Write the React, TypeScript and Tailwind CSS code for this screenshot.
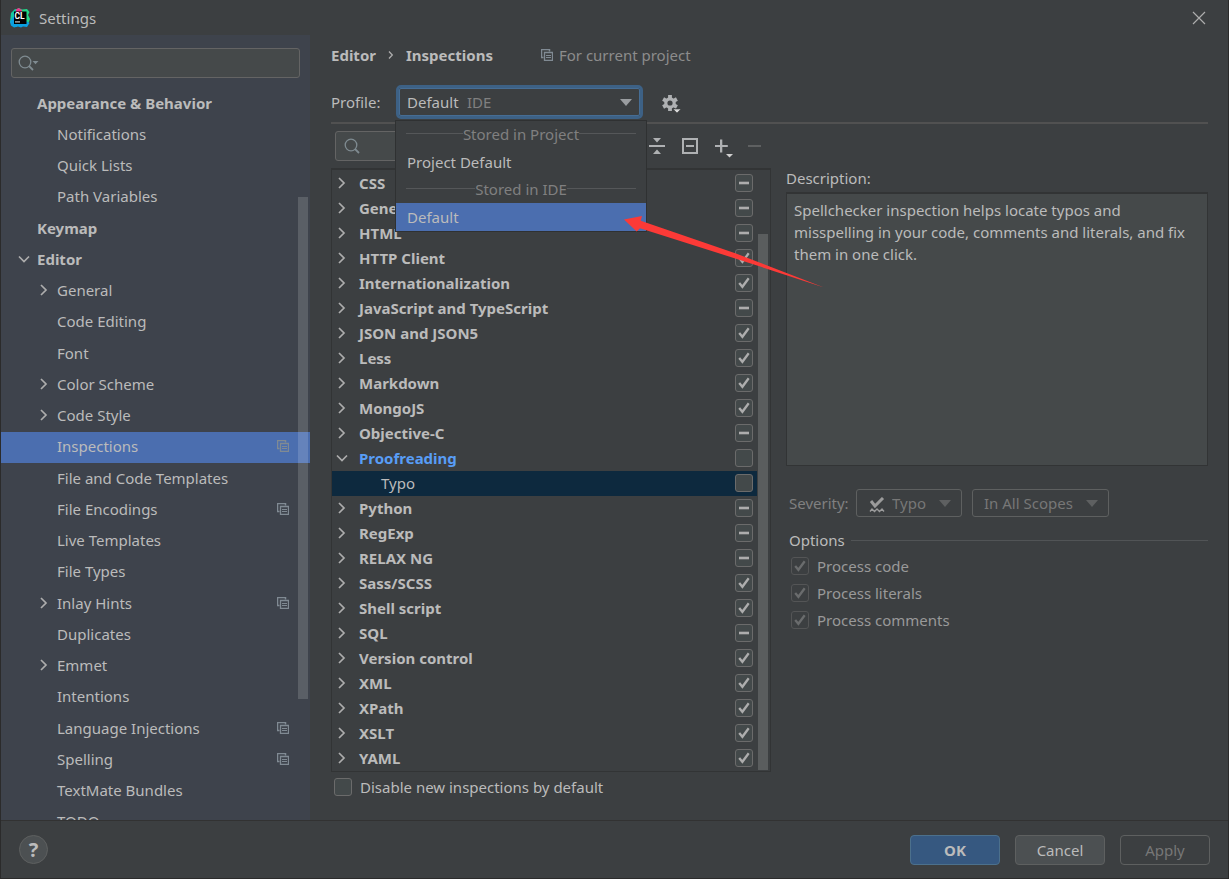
import React, { useState } from 'react';

type CheckState = 'on' | 'off' | 'mixed';

interface NavItem {
  label: string;
  level: 0 | 1;
  arrow?: 'open' | 'closed';
  perProject?: boolean;
}

interface Inspection {
  label: string;
  state: CheckState;
  open?: boolean;
  child?: boolean;
}

const NAV_ITEMS: NavItem[] = [
  { label: 'Appearance & Behavior', level: 0 },
  { label: 'Notifications', level: 1 },
  { label: 'Quick Lists', level: 1 },
  { label: 'Path Variables', level: 1 },
  { label: 'Keymap', level: 0 },
  { label: 'Editor', level: 0, arrow: 'open' },
  { label: 'General', level: 1, arrow: 'closed' },
  { label: 'Code Editing', level: 1 },
  { label: 'Font', level: 1 },
  { label: 'Color Scheme', level: 1, arrow: 'closed' },
  { label: 'Code Style', level: 1, arrow: 'closed' },
  { label: 'Inspections', level: 1, perProject: true },
  { label: 'File and Code Templates', level: 1 },
  { label: 'File Encodings', level: 1, perProject: true },
  { label: 'Live Templates', level: 1 },
  { label: 'File Types', level: 1 },
  { label: 'Inlay Hints', level: 1, arrow: 'closed', perProject: true },
  { label: 'Duplicates', level: 1 },
  { label: 'Emmet', level: 1, arrow: 'closed' },
  { label: 'Intentions', level: 1 },
  { label: 'Language Injections', level: 1, perProject: true },
  { label: 'Spelling', level: 1, perProject: true },
  { label: 'TextMate Bundles', level: 1 },
  { label: 'TODO', level: 1 },
];

const INSPECTIONS: Inspection[] = [
  { label: 'CSS', state: 'mixed' },
  { label: 'General', state: 'mixed' },
  { label: 'HTML', state: 'mixed' },
  { label: 'HTTP Client', state: 'on' },
  { label: 'Internationalization', state: 'on' },
  { label: 'JavaScript and TypeScript', state: 'mixed' },
  { label: 'JSON and JSON5', state: 'on' },
  { label: 'Less', state: 'on' },
  { label: 'Markdown', state: 'on' },
  { label: 'MongoJS', state: 'on' },
  { label: 'Objective-C', state: 'mixed' },
  { label: 'Proofreading', state: 'off', open: true },
  { label: 'Typo', state: 'off', child: true },
  { label: 'Python', state: 'mixed' },
  { label: 'RegExp', state: 'mixed' },
  { label: 'RELAX NG', state: 'mixed' },
  { label: 'Sass/SCSS', state: 'on' },
  { label: 'Shell script', state: 'on' },
  { label: 'SQL', state: 'mixed' },
  { label: 'Version control', state: 'on' },
  { label: 'XML', state: 'on' },
  { label: 'XPath', state: 'on' },
  { label: 'XSLT', state: 'on' },
  { label: 'YAML', state: 'on' },
];

const OPTIONS = ['Process code', 'Process literals', 'Process comments'];

const Chevron: React.FC<{ open?: boolean }> = ({ open }) => (
  <svg viewBox="0 0 12 12" className="size-3 shrink-0" fill="none" stroke="#adadad" strokeWidth="1.7">
    <path d={open ? 'M1 3.5 6 8.5 11 3.5' : 'M3 1 8 6 3 11'} />
  </svg>
);

const ProjectIcon: React.FC = () => (
  <svg viewBox="0 0 12 12" className="size-3 shrink-0" fill="none" stroke="#808a93">
    <path d="M2.5 8.5h-2v-8h8v2" strokeWidth="1.5" />
    <path d="M3.5 3.5h8v8h-8z" strokeWidth="1.3" />
    <path d="M5 6.5h5M5 8.5h5" />
  </svg>
);

const TriangleDown: React.FC<{ color: string }> = ({ color }) => (
  <svg viewBox="0 0 12 7" className="h-[7px] w-3" fill={color}>
    <path d="M0 0h12L6 7z" />
  </svg>
);

const SearchIcon: React.FC<{ menu?: boolean }> = ({ menu }) => (
  <svg viewBox="0 0 22 16" className="h-4 w-[22px]" fill="none" stroke="#7f8b91">
    <circle cx="7" cy="7" r="5.8" strokeWidth="1.3" />
    <path d="m11 11 4 4" strokeWidth="1.8" />
    {menu && <path d="M14.5 6h6l-3 3.2z" fill="#7f8b91" stroke="none" />}
  </svg>
);

const Check: React.FC<{ state: CheckState; label: string; disabled?: boolean }> = ({ state, label, disabled }) => {
  const [value, setValue] = useState<CheckState>(state);

  return (
    <span className="grid size-[18px] shrink-0 place-items-center">
      <input
        type="checkbox"
        aria-label={label}
        disabled={disabled}
        checked={value === 'on'}
        ref={(el) => {
          if (el) el.indeterminate = value === 'mixed';
        }}
        onChange={() => setValue(value === 'on' ? 'off' : 'on')}
        className="col-start-1 row-start-1 size-[18px] appearance-none rounded-[3px] border border-[#6b6b6b] bg-[#43494a] disabled:border-[#545556] disabled:bg-[#3c3f41]"
      />
      {value !== 'off' && (
        <svg
          viewBox="0 0 18 18"
          className="pointer-events-none col-start-1 row-start-1 size-[18px]"
          fill="none"
          stroke={disabled ? '#6a6c6d' : '#adadad'}
          strokeWidth="2.3"
        >
          {value === 'on' ? <path d="M4.2 9 7.4 12.800 13.700 4.300" /> : <path d="M4 9h10" strokeWidth="2.6" />}
        </svg>
      )}
    </span>
  );
};

const Logo: React.FC = () => (
  <svg viewBox="0 0 20 20" className="size-5">
    <path d="M1 5 5 1l4 .5L8 11l-1 8-4-1-3-4z" fill="#14c8a0" />
    <path d="M6 1.5 9 0l3 1.5 5-.5 2.500 3-1.500 3 2 4-2 5H8z" fill="#21d789" />
    <path d="M6 1.5 8.5 0l3.5 2-1 4H6z" fill="#ed358c" />
    <path d="m0 14 3-5 13 4 3.500 2-2.500 4-4-.5-2 1-3-1-4 1-3-2z" fill="#0a9fe0" />
    <path d="M4 3.500h12.500v12.500H4z" fill="#000" />
    <text x="4.500" y="11" fill="#fff" fontSize="8.5" fontWeight="700" fontFamily="Roboto, sans-serif">
      CL
    </text>
    <path d="M5 13.300h5v1.200H5z" fill="#ccc" />
  </svg>
);

const Sidebar: React.FC = () => {
  const [selected, setSelected] = useState('Inspections');

  return (
    <aside className="relative flex w-[309px] shrink-0 flex-col overflow-hidden bg-[#3e434c]">
      <div className="relative mx-[10px] mt-[13px]">
        <input
          type="search"
          aria-label="Search settings"
          className="block h-[30px] w-full rounded-[3px] border border-[#646464] bg-[#45494a] pl-9 outline-none"
        />
        <span className="pointer-events-none absolute top-[7px] left-[7px]">
          <SearchIcon menu />
        </span>
      </div>
      <nav className="mt-[10px] flex h-[750px] shrink-0 flex-col">
        {NAV_ITEMS.map((item) => (
          <button
            key={item.label}
            type="button"
            onClick={() => setSelected(item.label)}
            className={`flex w-full flex-1 items-center pr-[21px] pb-[2px] text-left ${
              item.level === 0 ? 'pl-[17px] font-bold' : 'pl-[37px]'
            } ${item.label === selected ? 'bg-[#4b6eaf]' : ''}`}
          >
            <span className="flex w-[19px] shrink-0">{item.arrow && <Chevron open={item.arrow === 'open'} />}</span>
            <span className="flex-1 whitespace-nowrap">{item.label}</span>
            {item.perProject && <ProjectIcon />}
          </button>
        ))}
      </nav>
      <div className="absolute top-[162px] right-[2px] h-[502px] w-[10px] bg-white/15" />
    </aside>
  );
};

const PopupHeader: React.FC<{ children: React.ReactNode }> = ({ children }) => (
  <div className="flex h-[27px] items-center px-[10px] pb-[2px] text-[#808080]">
    <span className="h-px flex-1 bg-[#555759]" />
    {children}
    <span className="h-px flex-1 bg-[#555759]" />
  </div>
);

const ProfilePicker: React.FC = () => {
  const [profile, setProfile] = useState('Default');
  const [open, setOpen] = useState(true);

  const pick = (name: string) => {
    setProfile(name);
    setOpen(false);
  };

  return (
    <div className="relative ml-auto h-[34px] w-[247px]">
      <select
        id="profile"
        value={profile}
        onMouseDown={(e) => {
          e.preventDefault();
          setOpen(!open);
        }}
        onChange={(e) => setProfile(e.target.value)}
        className="h-full w-full appearance-none rounded-[5px] border-[3px] border-[#3d6185] bg-[#3c3f41] pl-2 outline-1 -outline-offset-4 outline-[#466d94]"
      >
        <option>Project Default</option>
        <option>Default</option>
      </select>
      <span className="pointer-events-none absolute inset-y-0 left-[71px] flex items-center text-[#808080]">IDE</span>
      <span className="pointer-events-none absolute inset-y-0 right-[11px] flex items-center">
        <TriangleDown color="#9a9da0" />
      </span>
      {open && (
        <div className="absolute top-[35px] left-[-1px] z-10 w-[252px] border border-[#2f3132] bg-[#3c3f41]">
          <PopupHeader>Stored in Project</PopupHeader>
          <button type="button" onClick={() => pick('Project Default')} className="block h-7 w-full px-[11px] text-left">
            Project Default
          </button>
          <PopupHeader>Stored in IDE</PopupHeader>
          <button type="button" onClick={() => pick('Default')} className="block h-7 w-full bg-[#4b6eaf] px-[11px] text-left">
            Default
          </button>
        </div>
      )}
      {/* Pointer to the selected profile */}
      <svg
        viewBox="0 0 201 72"
        className="pointer-events-none absolute top-[131px] left-[228px] z-20 h-[72px] w-[201px]"
        fill="#fc3a37"
      >
        <path d="M0 3.500 18 0l-1.300 4.700L112 37.500 200 71.500 112 42.700 16 12.300l-3.300 3.200z" />
      </svg>
    </div>
  );
};

const Toolbar: React.FC = () => (
  <div className="flex items-center pt-[7px]">
    <div className="relative ml-1 w-[280px]">
      <input
        type="search"
        aria-label="Search inspections"
        className="block h-[30px] w-full rounded-[3px] border border-[#646464] bg-[#45494a] pl-9 outline-none"
      />
      <span className="pointer-events-none absolute top-[7px] left-[9px]">
        <SearchIcon />
      </span>
    </div>
    <div className="ml-auto flex gap-[15px] pr-[6px]">
      <button type="button" aria-label="Collapse all">
        <svg viewBox="0 0 18 18" className="size-[18px]" fill="#afb1b3">
          <path d="M1 8h16v2H1zM5 1h8L9 5.4zM5 17h8l-4-4.4z" />
        </svg>
      </button>
      <button type="button" aria-label="Reset to empty">
        <svg viewBox="0 0 18 18" className="size-[18px]" fill="none" stroke="#afb1b3" strokeWidth="2">
          <path d="M2 2h14v14H2zM5 9h8" />
        </svg>
      </button>
      <button type="button" aria-label="Add">
        <svg viewBox="0 0 18 18" className="size-[18px] overflow-visible" fill="#afb1b3">
          <path d="M6 2.500h2.300V8h5.500v2H8.300v5.500H6V10H1V8h5z" />
          <path d="M12 17h7l-3.500 3.500z" fill="#d0d0d0" />
        </svg>
      </button>
      <button type="button" aria-label="Remove" disabled>
        <svg viewBox="0 0 18 18" className="size-[18px]" fill="#5e6061">
          <path d="M1 8h13v2H1z" />
        </svg>
      </button>
    </div>
  </div>
);

const InspectionTree: React.FC = () => (
  <div className="mt-[7px] flex min-h-0 flex-1 border border-t-2 border-[#323435] pt-px">
    <ul className="min-w-0 flex-1 overflow-hidden">
      {INSPECTIONS.map((item) => (
        <li
          key={item.label}
          className={`flex h-[25px] items-center pr-1 pb-[2px] pl-1 ${item.child ? 'bg-[#0d293e]' : 'font-bold'} ${
            item.open ? 'text-[#589df6]' : ''
          }`}
        >
          <span className={`flex shrink-0 ${item.child ? 'w-[45px]' : 'w-[23px]'}`}>
            {!item.child && <Chevron open={item.open} />}
          </span>
          <span className="flex-1 whitespace-nowrap">{item.label}</span>
          <Check state={item.state} label={item.label} />
        </li>
      ))}
    </ul>
    <div className="flex w-[13px] shrink-0 flex-col pt-[63px] pb-px pl-px">
      <div className="w-[10px] flex-1 bg-[#5a5d5e]" />
    </div>
  </div>
);

const Details: React.FC = () => (
  <section className="flex min-w-0 flex-1 flex-col pt-[42px]">
    <h2 className="leading-6">Description:</h2>
    <div className="mt-[2px] h-[274px] border border-t-2 border-[#323435] bg-[#45494a] py-[5px] pr-[10px] pl-[7px] leading-[22px]">
      Spellchecker inspection helps locate typos and misspelling in your code, comments and literals, and fix them in
      one click.
    </div>
    <div className="mt-[23px] flex h-7 items-center pl-[3px] text-[#808080]">
      <label htmlFor="severity" className="w-[67px]">
        Severity:
      </label>
      <div className="relative">
        <select
          id="severity"
          disabled
          className="h-7 w-[106px] appearance-none rounded-[3px] border border-[#5e6060] pl-[35px] text-[#777777] opacity-100"
        >
          <option>Typo</option>
        </select>
        <svg viewBox="0 0 16 16" className="absolute top-2 left-[13px] size-4" fill="none" stroke="#9b9b9b">
          <path d="m2 4 4 5 8-8" strokeWidth="3" />
          <path d="m1 14.500 2-2.500 2.500 2.500L8 12l2.500 2.500L13 12l2 2.500" strokeWidth="1.300" />
        </svg>
        <span className="pointer-events-none absolute inset-y-0 right-[11px] flex items-center">
          <TriangleDown color="#5e6061" />
        </span>
      </div>
      <div className="relative ml-[10px]">
        <select
          aria-label="Scope"
          disabled
          className="h-7 w-[137px] appearance-none rounded-[3px] border border-[#5e6060] pl-[11px] text-[#777777] opacity-100"
        >
          <option>In All Scopes</option>
        </select>
        <span className="pointer-events-none absolute inset-y-0 right-[11px] flex items-center">
          <TriangleDown color="#5e6061" />
        </span>
      </div>
    </div>
    <div className="mt-[11px] flex h-6 items-center gap-[6px] pl-[3px]">
      <h3>Options</h3>
      <span className="h-px flex-1 bg-[#515456]" />
    </div>
    {OPTIONS.map((option) => (
      <label key={option} className="flex h-[27px] items-center gap-2 pl-[5px] text-[#999999]">
        <Check state="on" label={option} disabled />
        {option}
      </label>
    ))}
  </section>
);

const App: React.FC = () => (
  <div className="flex h-screen flex-col overflow-hidden border border-t-0 border-[#2b2b2b] bg-[#3c3f41] font-['Noto_Sans','Open_Sans',sans-serif] text-[15px] leading-6 text-[#bbbbbb]">
    {/* Title bar */}
    <header className="flex h-[35px] shrink-0 items-center px-[9px]">
      <Logo />
      <h1 className="ml-[9px] flex-1">Settings</h1>
      <button type="button" aria-label="Close" className="mr-[13px]">
        <svg viewBox="0 0 14 14" className="size-[14px]" fill="none" stroke="#adadad" strokeWidth="1.2">
          <path d="m1 1 12 12M13 1 1 13" />
        </svg>
      </button>
    </header>

    <div className="flex min-h-0 flex-1">
      <Sidebar />
      <main className="flex min-w-0 flex-1 flex-col pr-5 pb-6 pl-[21px]">
        <div className="mt-1 flex h-8 items-center font-bold">
          <a href="#editor">Editor</a>
          <svg viewBox="0 0 6 8" className="mx-3 h-2 w-[6px]" fill="none" stroke="#adadad" strokeWidth="1.3">
            <path d="m1 .5 3.300 3.500L1 7.500" />
          </svg>
          <span>Inspections</span>
          <span className="ml-12 flex items-center gap-[6px] font-normal text-[#8c8c8c]">
            <ProjectIcon />
            For current project
          </span>
        </div>

        <div className="mt-[14px] flex">
          <div className="flex w-[312px] items-center">
            <label htmlFor="profile">Profile:</label>
            <ProfilePicker />
          </div>
          <button type="button" aria-label="Profile actions" className="ml-[18px] pt-[2px]">
            <svg viewBox="0 0 20 20" className="size-5" fill="none">
              <circle cx="9" cy="10" r="4.200" stroke="#afb1b3" strokeWidth="3.200" />
              <path
                d="M9 2v3M9 15v3M2.100 6l2.600 1.500M13.300 12.500l2.600 1.500M2.100 14l2.600-1.500M13.300 7.500l2.600-1.500"
                stroke="#afb1b3"
                strokeWidth="3.800"
              />
              <path d="M12 16h8l-4 4z" fill="#d8d8d8" stroke="#3c3f41" strokeWidth=".6" />
            </svg>
          </button>
        </div>

        <div className="mt-[3px] h-[2px] shrink-0 bg-[#515151]" />

        <div className="flex min-h-0 flex-1 gap-[15px]">
          <section className="flex w-[440px] shrink-0 flex-col">
            <Toolbar />
            <InspectionTree />
            <label className="mt-[6px] flex h-[18px] items-center gap-2 pl-[3px]">
              <Check state="off" label="Disable new inspections by default" />
              Disable new inspections by default
            </label>
          </section>
          <Details />
        </div>
      </main>
    </div>

    {/* Dialog buttons */}
    <footer className="flex h-[58px] shrink-0 items-center gap-[15px] border-t border-[#323232] px-[18px]">
      <button
        type="button"
        aria-label="Help"
        className="mr-auto flex size-[29px] items-center justify-center rounded-full border border-[#5e6060] bg-[#4c5052] text-xl font-bold"
      >
        ?
      </button>
      <button type="button" className="h-[30px] w-[90px] rounded-[4px] border border-[#4c708c] bg-[#365880] font-bold">
        OK
      </button>
      <button type="button" className="h-[30px] w-[90px] rounded-[4px] border border-[#5e6060] bg-[#4c5052]">
        Cancel
      </button>
      <button type="button" disabled className="h-[30px] w-[90px] rounded-[4px] border border-[#5e6060] text-[#777777]">
        Apply
      </button>
    </footer>
  </div>
);

export default App;
